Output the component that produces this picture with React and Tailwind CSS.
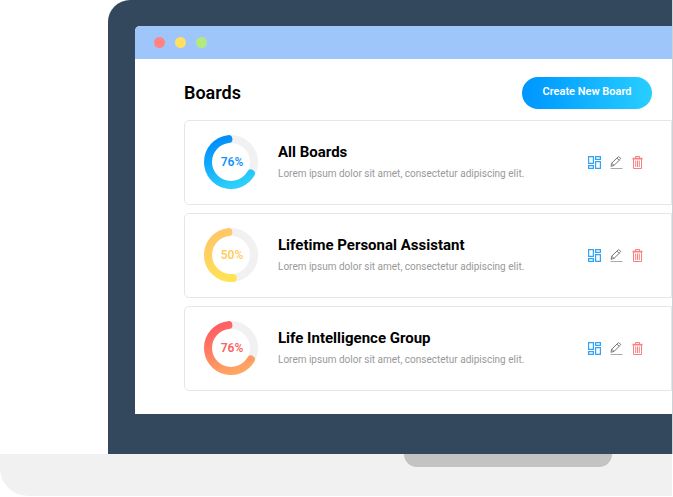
import React from "react";

const LOREM = "Lorem ipsum dolor sit amet, consectetur adipiscing elit.";

const boards = [
  { id: "blue", title: "All Boards", percent: "76%", from: "#0090fb", to: "#2bcffa", textClass: "text-[#1393f8]", arc: "M24.4 4.1 A23 23 0 0 0 4 27 A23 23 0 0 0 46.9 38.5" },
  { id: "yellow", title: "Lifetime Personal Assistant", percent: "50%", from: "#ffc766", to: "#ffe355", textClass: "text-[#ffcd60]", arc: "M24.4 4.1 A23 23 0 0 0 4 27 A23 23 0 0 0 28.8 49.9" },
  { id: "red", title: "Life Intelligence Group", percent: "76%", from: "#ff5f63", to: "#ffa562", textClass: "text-[#fb6062]", arc: "M24.4 4.1 A23 23 0 0 0 4 27 A23 23 0 0 0 46.9 38.5" },
];

function Ring({ board }) {
  return (
    <div className="mb-[2px] grid size-[54px] shrink-0 place-items-center">
      <svg viewBox="0 0 54 54" className="col-start-1 row-start-1 size-[54px]" fill="none" aria-hidden="true">
        <defs>
          <linearGradient id={board.id} x1="14" y1="6" x2="30" y2="50" gradientUnits="userSpaceOnUse">
            <stop stopColor={board.from} />
            <stop offset="1" stopColor={board.to} />
          </linearGradient>
        </defs>
        <circle cx="27" cy="27" r="23" stroke="#f1f1f1" strokeWidth="8" />
        <path d={board.arc} stroke={`url(#${board.id})`} strokeWidth="8" strokeLinecap="round" />
      </svg>
      <span className={`col-start-1 row-start-1 pl-[2px] text-xs leading-4 font-semibold ${board.textClass}`}>{board.percent}</span>
    </div>
  );
}

function BoardIcon() {
  return (
    <svg viewBox="0 0 13 13" className="size-[13px]" fill="none" stroke="#2fa3f8" strokeWidth="1.2" aria-hidden="true">
      <path d="M.6.6h4.8v6.8H.6zM.6 9.6h4.8v2.8H.6zM7.6.6h4.8v2.8H7.6zM7.6 5.6h4.8v6.8H7.6z" />
    </svg>
  );
}

function EditIcon() {
  return (
    <svg viewBox="0 0 13 13" className="size-[13px]" fill="none" stroke="#777" strokeLinejoin="round" aria-hidden="true">
      <path d="M1 10.3 1.7 7.2 8.2.9Q8.7.4 9.2.9l1.2 1.2q.5.5 0 1L4 9.4ZM7 2.1l2.2 2.2M1.7 7.2 4 9.4" />
      <path d="M.5 12.5h12" stroke="#aaa" />
    </svg>
  );
}

function TrashIcon() {
  return (
    <svg viewBox="0 0 11 13" className="h-[13px] w-[11px]" fill="none" stroke="#fb7f81" aria-hidden="true">
      <path d="M3.5 2V.5h4V2M1.5 3v9.5h8V3M3.7 4.5v6.5M5.5 4.5v6.5M7.3 4.5v6.5" />
      <path d="M.5 1.8h10v1.7H.5z" fill="#fb8082" stroke="none" />
    </svg>
  );
}

function BoardCard({ board }) {
  return (
    <li className="flex h-[85px] items-center rounded-l-[5px] border border-[#e6e6e6] bg-white pr-7 pl-[19px]">
      <Ring board={board} />
      <div className="mb-[2px] ml-5 min-w-0 flex-1">
        <h2 className="text-[15px] leading-5 font-bold text-black">{board.title}</h2>
        <p className="mt-1 text-[10px] leading-4 whitespace-nowrap text-[#999]">{LOREM}</p>
      </div>
      <div className="flex items-center gap-[9px]">
        <button type="button" aria-label={`Open ${board.title}`}><BoardIcon /></button>
        <button type="button" aria-label={`Edit ${board.title}`}><EditIcon /></button>
        <button type="button" aria-label={`Delete ${board.title}`}><TrashIcon /></button>
      </div>
    </li>
  );
}

export default function App() {
  return (
    <div className="overflow-hidden bg-white font-['Roboto',sans-serif]">
      <div className="ml-[108px] border-r border-[#cdd2d7]">
        <div className="rounded-tl-[22px] bg-[#33485d] pt-[26px] pb-10 pl-[27px]">
          <div className="overflow-hidden rounded-tl-[5px] bg-white">
            <div className="flex h-[33px] items-center gap-[10px] bg-[#9fc6fa] pl-[19px]">
              <span className="size-[11px] rounded-full bg-[#ff8383]" />
              <span className="size-[11px] rounded-full bg-[#ffe061]" />
              <span className="size-[11px] rounded-full bg-[#b3e97e]" />
            </div>
            <main className="pb-[23px] pl-[49px]">
              <header className="flex items-center justify-between pt-[18px] pr-5 pb-[11px]">
                <h1 className="text-lg leading-6 font-semibold text-black">Boards</h1>
                <button type="button" className="h-8 w-[130px] rounded-full bg-linear-to-r from-[#0095ff] to-[#28ceff] pb-[2px] text-[11px] leading-4 font-semibold text-white">
                  Create New Board
                </button>
              </header>
              <ul className="flex flex-col gap-2">
                {boards.map((board) => <BoardCard key={board.id} board={board} />)}
              </ul>
            </main>
          </div>
        </div>
      </div>
      <div className="mr-px flex h-[42px] rounded-bl-[28px] bg-[#f1f1f1] pl-[404px]">
        <div className="h-[13px] w-[208px] rounded-b-[13px] bg-[#c3c3c3]" />
      </div>
    </div>
  );
}
